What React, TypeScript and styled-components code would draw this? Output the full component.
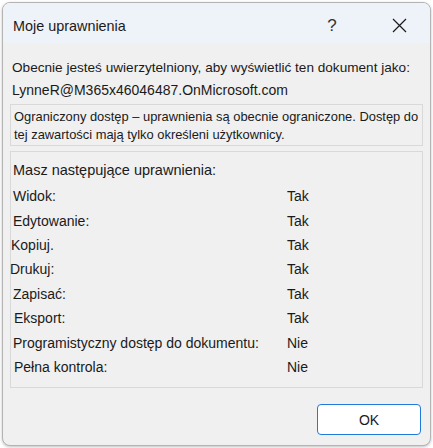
import React, { FC } from 'react'
import styled, { createGlobalStyle } from 'styled-components'

const GlobalStyle = createGlobalStyle`
  html, body {
    margin: 0;
    padding: 0;
    background: #ffffff;
  }
  body {
    font-family: 'Liberation Sans', Arial, sans-serif;
    color: #1a1a1a;
  }
`

const Page = styled.div`
  width: 433px;
  height: 448px;
  padding: 2px;
  box-sizing: border-box;
`

const Window = styled.div`
  height: 444px;
  box-sizing: border-box;
  border: 1px solid #b4b4b4;
  border-radius: 8px;
  background: #f0f0f0;
  box-shadow: 0 1px 3px rgba(0, 0, 0, 0.25);
  overflow: hidden;
  display: flex;
  flex-direction: column;
`

const TitleBar = styled.div`
  height: 40px;
  box-sizing: border-box;
  padding: 5px 0 0 10px;
  background: #eef2f9;
  display: flex;
  align-items: center;
  flex-shrink: 0;
`

const Title = styled.h1`
  flex: 1;
  margin: 0;
  font-size: 14.4px;
  font-weight: 400;
  color: #1a1a1a;
`

const TitleButton = styled.div<{ $width: number }>`
  width: ${({ $width }) => $width}px;
  height: 35px;
  display: flex;
  align-items: center;
  justify-content: center;
  font-size: 17px;
  color: #333;
`

const Body = styled.div`
  flex: 1;
  display: flex;
  flex-direction: column;
  padding: 13px 7px 10px 7px;
`

const Line = styled.div<{ $size: number }>`
  font-size: ${({ $size }) => $size}px;
  line-height: 23px;
  padding-left: 2px;
  white-space: nowrap;
`

const Panel = styled.div<{ $pad: string; $gap: number }>`
  border: 1px solid #d9d9d9;
  padding: ${({ $pad }) => $pad};
  margin-top: ${({ $gap }) => $gap}px;
`

const NoticeText = styled.div`
  font-size: 12.9px;
  line-height: 18px;
  padding-left: 1px;
  white-space: nowrap;
`

const PermissionsHeader = styled.div`
  font-size: 14.5px;
  line-height: 22px;
  margin-bottom: 3px;
`

const Row = styled.div`
  display: grid;
  grid-template-columns: 274px 1fr;
  font-size: 14px;
  height: 24.4px;
  align-items: center;
`

const Label = styled.span<{ $shift: number }>`
  padding-left: ${({ $shift }) => Math.max(0, $shift)}px;
  margin-left: ${({ $shift }) => Math.min(0, $shift)}px;
`

const Value = styled.span``

const Footer = styled.div`
  margin-top: auto;
  display: flex;
  justify-content: flex-end;
`

const OkButton = styled.button`
  width: 104px;
  height: 31px;
  background: #ffffff;
  border: 1px solid #1f7ad9;
  border-radius: 4px;
  font-family: 'Liberation Sans', Arial, sans-serif;
  font-size: 14px;
  color: #1a1a1a;
  margin-right: 2px;
`

const permissions: { label: string; value: string; shift: number }[] = [
  { label: 'Widok:', value: 'Tak', shift: 0 },
  { label: 'Edytowanie:', value: 'Tak', shift: 0 },
  { label: 'Kopiuj.', value: 'Tak', shift: -2 },
  { label: 'Drukuj:', value: 'Tak', shift: -3 },
  { label: 'Zapisać:', value: 'Tak', shift: 0 },
  { label: 'Eksport:', value: 'Tak', shift: 1 },
  { label: 'Programistyczny dostęp do dokumentu:', value: 'Nie', shift: 0 },
  { label: 'Pełna kontrola:', value: 'Nie', shift: 1 },
]

const CloseIcon: FC = () => (
  <svg width="15" height="15" viewBox="0 0 15 15">
    <path d="M1 1 L14 14 M14 1 L1 14" stroke="#1a1a1a" strokeWidth="1.2" fill="none" />
  </svg>
)

const App: FC = () => (
  <Page>
    <GlobalStyle />
    <Window>
      <TitleBar>
        <Title>Moje uprawnienia</Title>
        <TitleButton $width={72}>?</TitleButton>
        <TitleButton $width={62}>
          <CloseIcon />
        </TitleButton>
      </TitleBar>
      <Body>
        <Line $size={13.6}>Obecnie jesteś uwierzytelniony, aby wyświetlić ten dokument jako:</Line>
        <Line $size={14}>LynneR@M365x46046487.OnMicrosoft.com</Line>
        <Panel $pad="3px 2px 1px" $gap={2}>
          <NoticeText>
            Ograniczony dostęp – uprawnienia są obecnie ograniczone. Dostęp do
            <br />
            tej zawartości mają tylko określeni użytkownicy.
          </NoticeText>
        </Panel>
        <Panel $pad="7px 2px 8px" $gap={5}>
          <PermissionsHeader>Masz następujące uprawnienia:</PermissionsHeader>
          {permissions.map(({ label, value, shift }) => (
            <Row key={label}>
              <Label $shift={shift}>{label}</Label>
              <Value>{value}</Value>
            </Row>
          ))}
        </Panel>
        <Footer>
          <OkButton>OK</OkButton>
        </Footer>
      </Body>
    </Window>
  </Page>
)

export default App
